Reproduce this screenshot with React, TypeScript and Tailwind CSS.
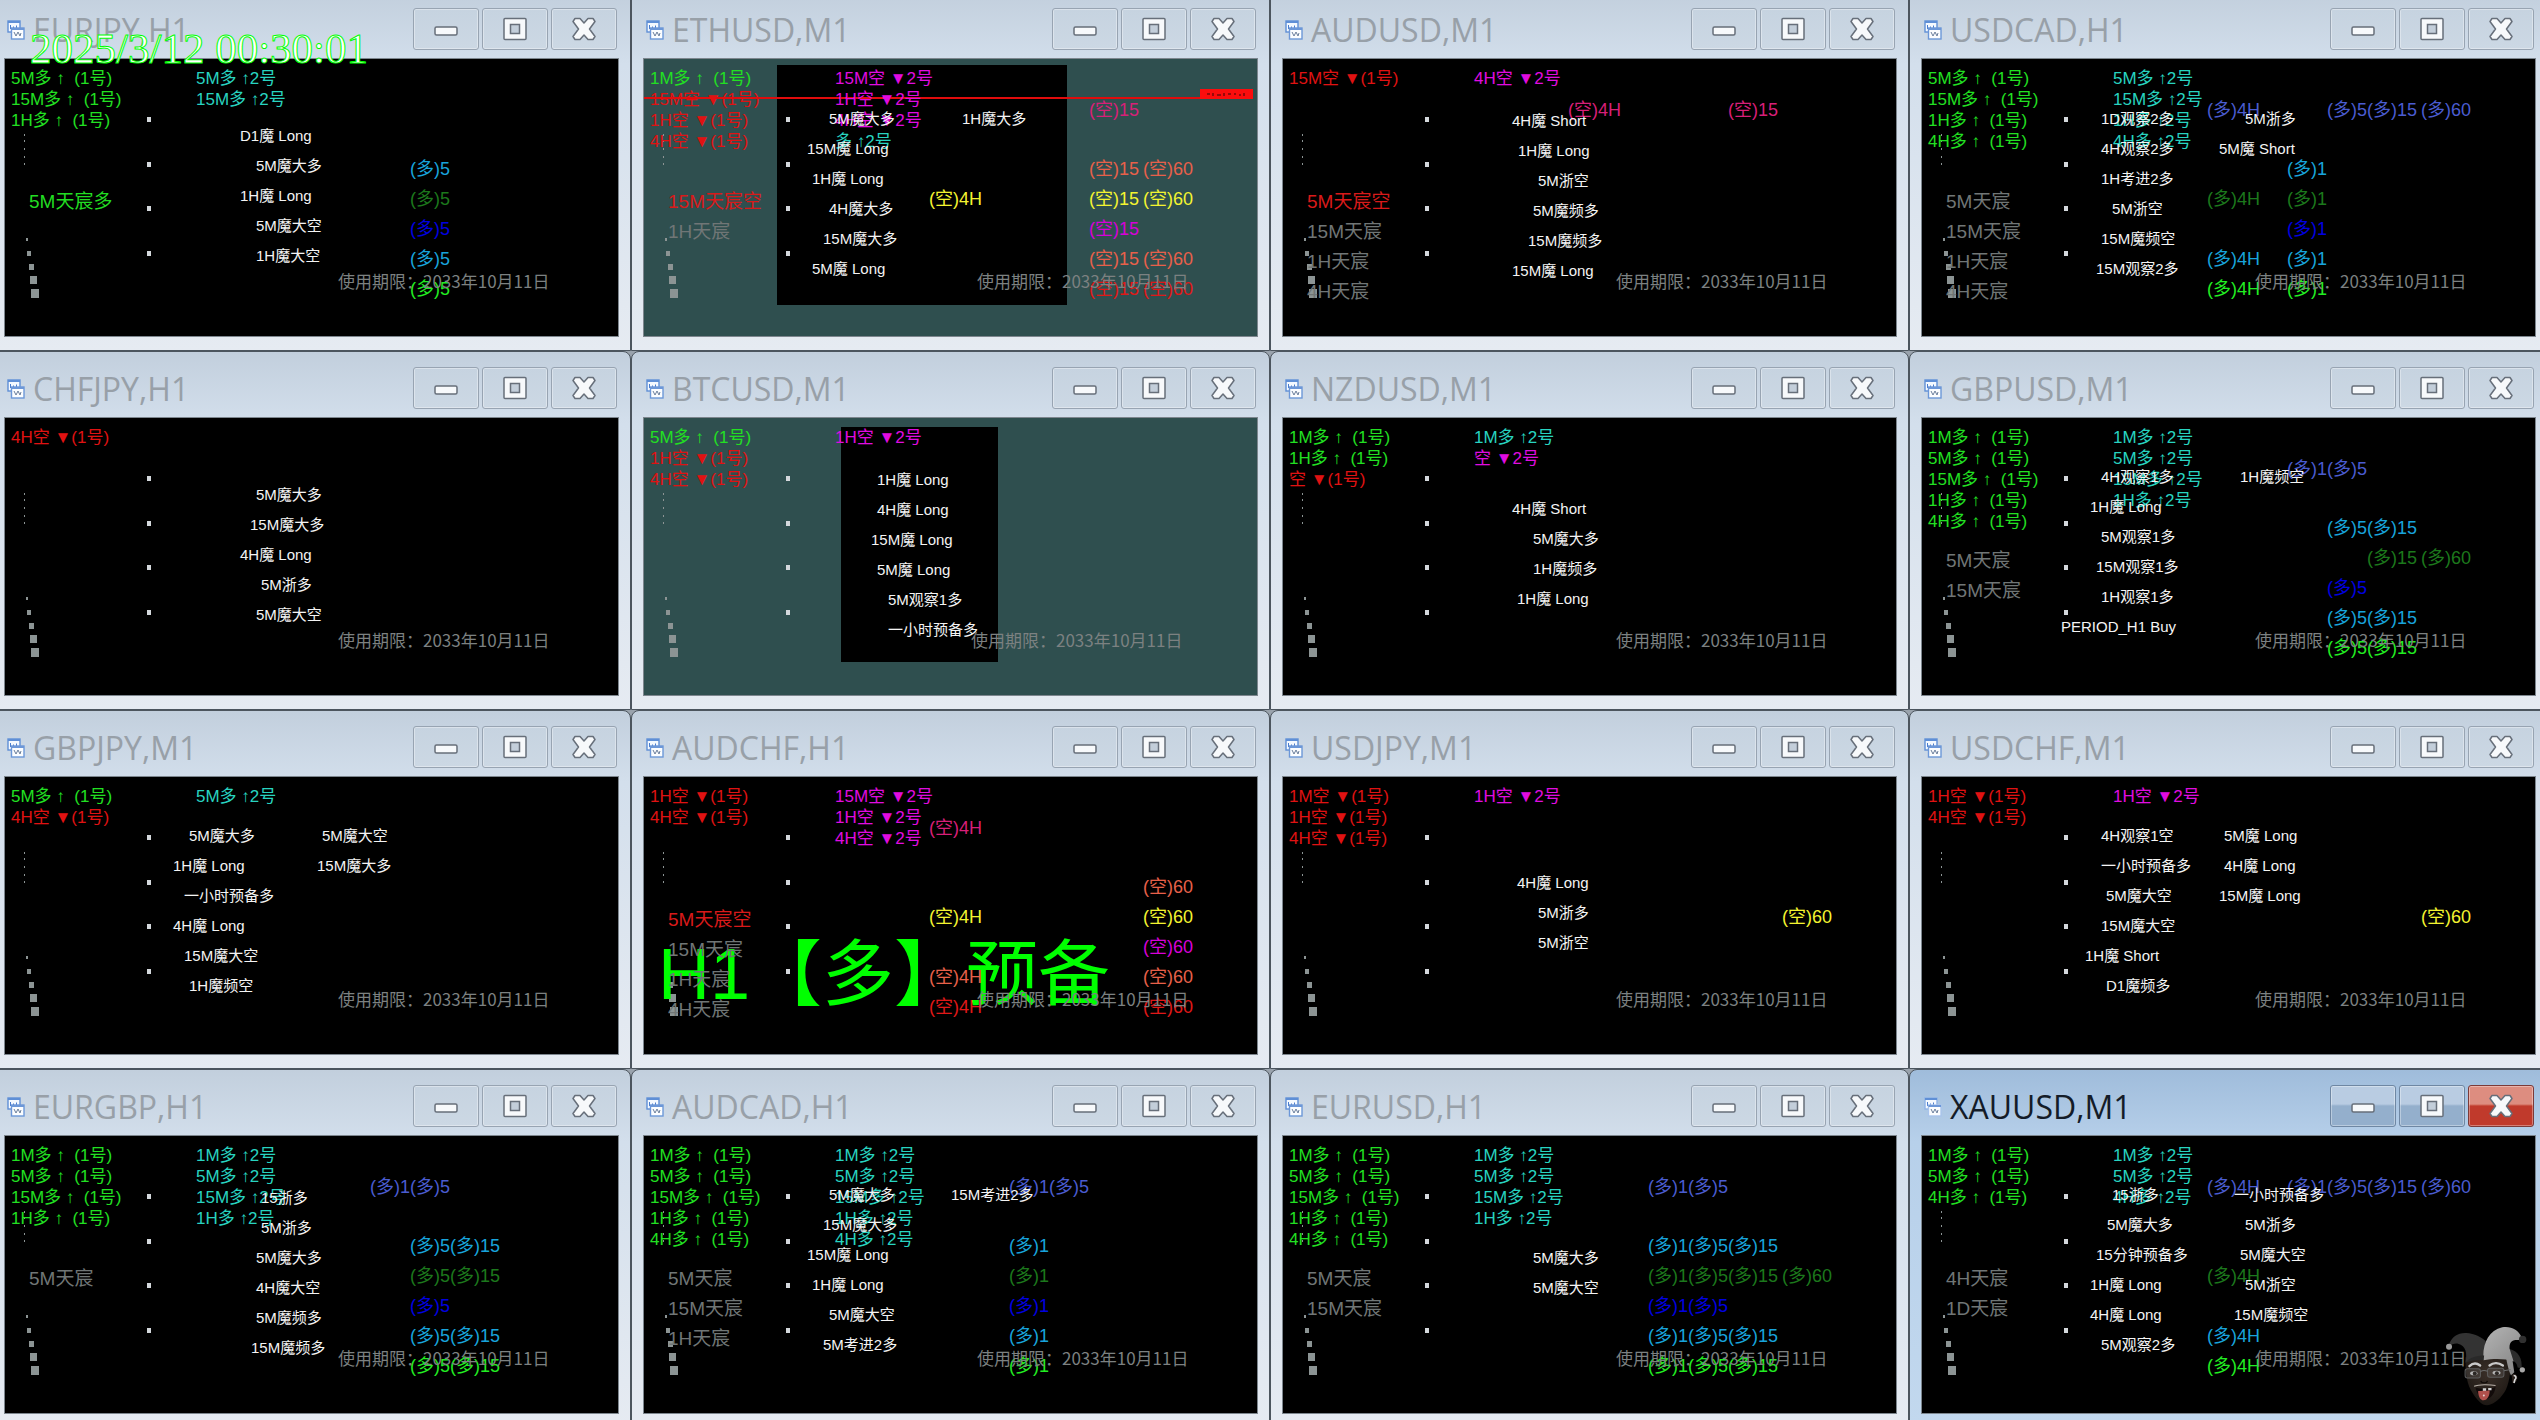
import React from "react";

type Side = "多" | "空";
type Note = [x: number, y: number, text: string];
type Slot = "4H" | "1" | "5" | "15" | "60";

interface Chart {
  symbol: string;
  side?: Side;
  first: string[];
  second: string[];
  tianchen?: string[];
  notes: Note[];
  slots?: Slot[][];
  active?: boolean;
  teal?: boolean;
  panel?: string;
  priceLine?: boolean;
  banner?: string;
  expiryShift?: boolean;
}

const up1 = (...frames: string[]) => frames.map((f) => f + "多 ↑  (1号)");
const down1 = (...frames: string[]) => frames.map((f) => f + "空 ▼(1号)");
const up2 = (...frames: string[]) => frames.map((f) => f + "多 ↑2号");
const down2 = (...frames: string[]) => frames.map((f) => f + "空 ▼2号");

const charts: Chart[] = [
  {
    symbol: "EURJPY,H1",
    side: "多",
    first: up1("5M", "15M", "1H"),
    second: up2("5M", "15M"),
    tianchen: ["5M天宸多"],
    notes: [
      [235, 78, "D1魔 Long"],
      [251, 108, "5M魔大多"],
      [235, 138, "1H魔 Long"],
      [251, 168, "5M魔大空"],
      [251, 198, "1H魔大空"],
    ],
    slots: [[], ["5"], ["5"], ["5"], ["5"], ["5"]],
  },
  {
    symbol: "ETHUSD,M1",
    side: "空",
    teal: true,
    panel: "left-[133px] top-[6px] w-[290px] h-[240px]",
    priceLine: true,
    first: [...up1("1M"), ...down1("15M", "1H", "4H")],
    second: [...down2("15M", "1H", "4H"), "多 ↑2号"],
    tianchen: ["15M天宸空", "1H天宸"],
    notes: [
      [185, 61, "5M魔大多"],
      [318, 61, "1H魔大多"],
      [163, 91, "15M魔 Long"],
      [168, 121, "1H魔 Long"],
      [185, 151, "4H魔大多"],
      [179, 181, "15M魔大多"],
      [168, 211, "5M魔 Long"],
    ],
    slots: [["15"], ["15", "60"], ["4H", "15", "60"], ["15"], ["15", "60"], ["15", "60"]],
  },
  {
    symbol: "AUDUSD,M1",
    side: "空",
    first: down1("15M"),
    second: down2("4H"),
    tianchen: ["5M天宸空", "15M天宸", "1H天宸", "4H天宸"],
    notes: [
      [229, 63, "4H魔 Short"],
      [235, 93, "1H魔 Long"],
      [255, 123, "5M浙空"],
      [250, 153, "5M魔频多"],
      [245, 183, "15M魔频多"],
      [229, 213, "15M魔 Long"],
    ],
    slots: [["4H", "15"]],
  },
  {
    symbol: "USDCAD,H1",
    side: "多",
    first: up1("5M", "15M", "1H", "4H"),
    second: up2("5M", "15M", "1H", "4H"),
    tianchen: ["5M天宸", "15M天宸", "1H天宸", "4H天宸"],
    notes: [
      [179, 61, "1D观察2多"],
      [323, 61, "5M浙多"],
      [179, 91, "4H观察2多"],
      [297, 91, "5M魔 Short"],
      [179, 121, "1H考进2多"],
      [190, 151, "5M浙空"],
      [179, 181, "15M魔频空"],
      [174, 211, "15M观察2多"],
    ],
    slots: [["4H", "5", "15", "60"], ["1"], ["4H", "1"], ["1"], ["4H", "1"], ["4H", "1"]],
  },
  {
    symbol: "CHFJPY,H1",
    first: down1("4H"),
    second: [],
    notes: [
      [251, 78, "5M魔大多"],
      [245, 108, "15M魔大多"],
      [235, 138, "4H魔 Long"],
      [256, 168, "5M浙多"],
      [251, 198, "5M魔大空"],
    ],
  },
  {
    symbol: "BTCUSD,M1",
    teal: true,
    panel: "left-[197px] top-[9px] w-[157px] h-[235px]",
    expiryShift: true,
    first: [...up1("5M"), ...down1("1H", "4H")],
    second: down2("1H"),
    notes: [
      [233, 63, "1H魔 Long"],
      [233, 93, "4H魔 Long"],
      [227, 123, "15M魔 Long"],
      [233, 153, "5M魔 Long"],
      [244, 183, "5M观察1多"],
      [244, 213, "一小时预备多"],
    ],
  },
  {
    symbol: "NZDUSD,M1",
    first: [...up1("1M", "1H"), ...down1("")],
    second: [...up2("1M"), ...down2("")],
    notes: [
      [229, 92, "4H魔 Short"],
      [250, 122, "5M魔大多"],
      [250, 152, "1H魔频多"],
      [234, 182, "1H魔 Long"],
    ],
  },
  {
    symbol: "GBPUSD,M1",
    side: "多",
    first: up1("1M", "5M", "15M", "1H", "4H"),
    second: up2("1M", "5M", "15M", "1H"),
    tianchen: ["5M天宸", "15M天宸"],
    notes: [
      [179, 60, "4H观察1多"],
      [318, 60, "1H魔频空"],
      [168, 90, "1H魔 Long"],
      [179, 120, "5M观察1多"],
      [174, 150, "15M观察1多"],
      [179, 180, "1H观察1多"],
      [139, 210, "PERIOD_H1 Buy"],
    ],
    slots: [["1", "5"], ["5", "15"], ["15", "60"], ["5"], ["5", "15"], ["5", "15"]],
  },
  {
    symbol: "GBPJPY,M1",
    first: [...up1("5M"), ...down1("4H")],
    second: up2("5M"),
    notes: [
      [184, 60, "5M魔大多"],
      [317, 60, "5M魔大空"],
      [168, 90, "1H魔 Long"],
      [312, 90, "15M魔大多"],
      [179, 120, "一小时预备多"],
      [168, 150, "4H魔 Long"],
      [179, 180, "15M魔大空"],
      [184, 210, "1H魔频空"],
    ],
  },
  {
    symbol: "AUDCHF,H1",
    side: "空",
    banner: "H1【多】预备",
    first: down1("1H", "4H"),
    second: down2("15M", "1H", "4H"),
    tianchen: ["5M天宸空", "15M天宸", "1H天宸", "4H天宸"],
    notes: [],
    slots: [["4H"], ["60"], ["4H", "60"], ["60"], ["4H", "60"], ["4H", "60"]],
  },
  {
    symbol: "USDJPY,M1",
    side: "空",
    first: down1("1M", "1H", "4H"),
    second: down2("1H"),
    notes: [
      [234, 107, "4H魔 Long"],
      [255, 137, "5M浙多"],
      [255, 167, "5M浙空"],
    ],
    slots: [[], [], ["60"]],
  },
  {
    symbol: "USDCHF,M1",
    side: "空",
    first: down1("1H", "4H"),
    second: down2("1H"),
    notes: [
      [179, 60, "4H观察1空"],
      [302, 60, "5M魔 Long"],
      [179, 90, "一小时预备多"],
      [302, 90, "4H魔 Long"],
      [184, 120, "5M魔大空"],
      [297, 120, "15M魔 Long"],
      [179, 150, "15M魔大空"],
      [163, 180, "1H魔 Short"],
      [184, 210, "D1魔频多"],
    ],
    slots: [[], [], ["60"]],
  },
  {
    symbol: "EURGBP,H1",
    side: "多",
    first: up1("1M", "5M", "15M", "1H"),
    second: up2("1M", "5M", "15M", "1H"),
    tianchen: ["5M天宸"],
    notes: [
      [256, 63, "15浙多"],
      [256, 93, "5M浙多"],
      [251, 123, "5M魔大多"],
      [251, 153, "4H魔大空"],
      [251, 183, "5M魔频多"],
      [246, 213, "15M魔频多"],
    ],
    slots: [["1", "5"], ["5", "15"], ["5", "15"], ["5"], ["5", "15"], ["5", "15"]],
  },
  {
    symbol: "AUDCAD,H1",
    side: "多",
    first: up1("1M", "5M", "15M", "1H", "4H"),
    second: up2("1M", "5M", "15M", "1H", "4H"),
    tianchen: ["5M天宸", "15M天宸", "1H天宸"],
    notes: [
      [185, 60, "5M魔大多"],
      [307, 60, "15M考进2多"],
      [179, 90, "15M魔大多"],
      [163, 120, "15M魔 Long"],
      [168, 150, "1H魔 Long"],
      [185, 180, "5M魔大空"],
      [179, 210, "5M考进2多"],
    ],
    slots: [["1", "5"], ["1"], ["1"], ["1"], ["1"], ["1"]],
  },
  {
    symbol: "EURUSD,H1",
    side: "多",
    first: up1("1M", "5M", "15M", "1H", "4H"),
    second: up2("1M", "5M", "15M", "1H"),
    tianchen: ["5M天宸", "15M天宸"],
    notes: [
      [250, 123, "5M魔大多"],
      [250, 153, "5M魔大空"],
    ],
    slots: [["1", "5"], ["1", "5", "15"], ["1", "5", "15", "60"], ["1", "5"], ["1", "5", "15"], ["1", "5", "15"]],
  },
  {
    symbol: "XAUUSD,M1",
    side: "多",
    active: true,
    first: up1("1M", "5M", "4H"),
    second: up2("1M", "5M", "4H"),
    tianchen: ["4H天宸", "1D天宸"],
    notes: [
      [190, 60, "15浙多"],
      [312, 60, "一小时预备多"],
      [185, 90, "5M魔大多"],
      [323, 90, "5M浙多"],
      [174, 120, "15分钟预备多"],
      [318, 120, "5M魔大空"],
      [168, 150, "1H魔 Long"],
      [323, 150, "5M浙空"],
      [168, 180, "4H魔 Long"],
      [312, 180, "15M魔频空"],
      [179, 210, "5M观察2多"],
    ],
    slots: [["4H", "1", "5", "15", "60"], [], ["4H"], [], ["4H"], ["4H"]],
  },
];

const slotX: Record<Slot, number> = { "4H": 285, "1": 365, "5": 405, "15": 445, "60": 499 };
const slotY = [52, 111, 141, 171, 201, 231];
const slotColor: Record<Side, string[]> = {
  多: ["text-[#4a5cd0]", "text-[#18a4dc]", "text-[#1c781c]", "text-[#0000e0]", "text-[#18a4dc]", "text-[#22ee22]"],
  空: ["text-[#d81f78]", "text-[#e8604a]", "text-[#f4f430]", "text-[#d800d8]", "text-[#e8604a]", "text-[#e01818]"],
};

function ChartIcon({ active }: { active?: boolean }) {
  return (
    <svg viewBox="0 0 18 20" className="h-5 w-[18px] shrink-0" aria-hidden="true">
      <rect x="1" y="1" width="12" height="11" fill="#f4f9ff" stroke={active ? "#8fb3e6" : "#5f8fd6"} strokeWidth="1.4" />
      <path d="M1 2h12" stroke="#5f8fd6" strokeWidth="2" />
      <path d="M3.5 5v4M6.5 6.5v3M9.5 5.5v3" stroke="#4a7ccc" />
      <rect x="4.5" y="8" width="12.5" height="11" fill="#fbfdff" stroke={active ? "#a9c4ec" : "#6c97d8"} strokeWidth="1.4" />
      <path d="M4.5 9h12.5" stroke="#6c97d8" strokeWidth="2" />
      <path d="M7 12l2 4 2-4 2 4 1-3" fill="none" stroke="#6b7f9c" />
    </svg>
  );
}

function MinimizeIcon() {
  return (
    <svg viewBox="0 0 24 24" className="h-6 w-6" aria-hidden="true">
      <rect x="1" y="10" width="22" height="8" rx="1.5" fill="#f7f9fb" stroke="#676f7a" strokeWidth="1.5" />
    </svg>
  );
}

function MaximizeIcon() {
  return (
    <svg viewBox="0 0 24 24" className="h-6 w-6" aria-hidden="true">
      <rect x="1" y="1.5" width="22" height="21" rx="1" fill="#f7f9fb" stroke="#676f7a" strokeWidth="1.5" />
      <rect x="7.5" y="7.5" width="9" height="9" fill="#c3ceda" stroke="#676f7a" strokeWidth="1.5" />
    </svg>
  );
}

function CloseIcon() {
  return (
    <svg viewBox="0 0 24 24" className="h-6 w-6" aria-hidden="true">
      <path
        d="M3 1.500h5l4 4.500 4-4.500h5l2 3-5.500 7.500 5.500 7.500-2 3h-5l-4-4.500-4 4.500H3l-2-3L6.500 12 1 4.500z"
        fill="#f7f9fb"
        stroke="#676f7a"
        strokeWidth="1.5"
        strokeLinejoin="round"
      />
    </svg>
  );
}

function Markers() {
  return (
    <svg viewBox="0 0 160 260" className="absolute left-0 top-0 h-[260px] w-40" aria-hidden="true">
      <g fill="#d4d8dc">
        {[58, 103, 147, 192].map((y) => (
          <rect key={y} x="142" y={y} width="4" height="5" />
        ))}
      </g>
      <g fill="#8c9494">
        {[75, 81, 89, 97, 104].map((y) => (
          <rect key={y} x="19" y={y} width="1" height="2" />
        ))}
        <rect x="21" y="179" width="2" height="3" />
        <rect x="22" y="192" width="4" height="5" />
        <rect x="24" y="205" width="5" height="6" />
        <rect x="25" y="217" width="7" height="8" />
        <rect x="26" y="230" width="8" height="9" />
      </g>
    </svg>
  );
}

function ChartCanvas({ chart }: { chart: Chart }) {
  return (
    <div
      className={
        "relative min-h-0 flex-1 overflow-hidden border border-[#7d868e] font-['Liberation_Sans','Noto_Sans_CJK_SC',sans-serif] whitespace-pre " +
        (chart.teal ? "bg-[#2f4f4f]" : "bg-black")
      }
    >
      {chart.panel && <div className={"absolute bg-black " + chart.panel} />}
      {chart.priceLine && (
        <>
          <div className="absolute left-0 top-[38px] h-[2px] w-[556px] bg-[#e00c0c]" />
          <div className="absolute left-[556px] top-[30px] flex h-[10px] w-[53px] items-center justify-center bg-[#fa0d0d]">
            <svg viewBox="0 0 44 6" className="h-[6px] w-11" aria-hidden="true">
              <path d="M2 3h3M8 2v3M12 4h4M19 2v3M23 3h3M30 2v2M34 4h2M39 2v3" stroke="#7a0808" strokeWidth="1.5" />
            </svg>
          </div>
        </>
      )}
      <Markers />
      {chart.banner && (
        <p className="absolute left-[14px] top-[161px] text-[72px] leading-[72px] text-[#00ff00]">{chart.banner}</p>
      )}
      {chart.slots?.map((row, r) =>
        row.map((slot) => (
          <span
            key={r + slot}
            className={"absolute text-[18px] leading-5 " + slotColor[chart.side!][r]}
            style={{ left: slotX[slot], top: slotY[r] - 11 }}
          >
            {"(" + chart.side + ")" + slot}
          </span>
        )),
      )}
      <p
        className={
          "absolute top-[212px] font-['Noto_Sans_CJK_SC',sans-serif] text-[17px] leading-5 text-[#7c8181] " +
          (chart.expiryShift ? "left-[327px]" : "left-[333px]")
        }
      >
        使用期限：2033年10月11日
      </p>
      <ul className="absolute left-[24px] top-[128px] text-[19px] leading-[30px]">
        {chart.tianchen?.map((t) => (
          <li
            key={t}
            className={t.endsWith("多") ? "text-[#22dd22]" : t.endsWith("空") ? "text-[#d81a1a]" : "text-[#707676]"}
          >
            {t}
          </li>
        ))}
      </ul>
      <ul className="absolute left-[6px] top-[9px] text-[17px] leading-[21px]">
        {chart.first.map((t) => (
          <li key={t} className={t.includes("▼") ? "text-[#e01212]" : "text-[#22e022]"}>
            {t}
          </li>
        ))}
      </ul>
      <ul className="absolute left-[191px] top-[9px] text-[17px] leading-[21px]">
        {chart.second.map((t) => (
          <li key={t} className={t.includes("▼") ? "text-[#e00ce0]" : "text-[#28d4c0]"}>
            {t}
          </li>
        ))}
      </ul>
      {chart.notes.map(([x, y, text]) => (
        <span key={x + "-" + y} className="absolute text-[15px] leading-5 text-[#f4f4f4]" style={{ left: x, top: y - 11 }}>
          {text}
        </span>
      ))}
    </div>
  );
}

function ChartWindow({ chart }: { chart: Chart }) {
  const button = chart.active
    ? "border-[#6f87a3] bg-linear-to-b from-[#b9cce2] from-45% to-[#94afcc] to-50%"
    : "border-[#98a4b2] bg-linear-to-b from-[#c6d3e0] to-[#ccd8e4]";
  const close = chart.active ? "border-[#7c3a38] bg-linear-to-b from-[#dd8d80] from-45% to-[#c03a2c] to-50%" : button;
  const buttonBase = "flex h-[42px] w-[66px] items-center justify-center rounded-[3px] border shadow-[inset_0_0_0_1px_rgba(255,255,255,0.35)] ";
  return (
    <section
      className={
        "flex min-h-0 min-w-0 flex-col rounded-t-lg border border-[#4c555e] px-[11px] pb-[13px] " +
        (chart.active
          ? "bg-linear-to-b from-[#9fbcdb] via-[#b7d0ea] via-20% to-[#c2d8ee]"
          : "bg-linear-to-b from-[#c2cfdd] via-[#d3dfec] via-20% to-[#e6ebf2]")
      }
    >
      <header className="flex h-[65px] shrink-0 items-start gap-[3px] pr-[2px] pt-[15px]">
        <div className="flex min-w-0 flex-1 items-center gap-2 pl-[3px]">
          <ChartIcon active={chart.active} />
          <h2
            className={
              "font-['Open_Sans',sans-serif] text-[32px] leading-[44px] " +
              (chart.active ? "text-[#141c28]" : "text-[#98a0a8]")
            }
          >
            {chart.symbol}
          </h2>
        </div>
        <button type="button" aria-label={"Minimize " + chart.symbol} className={buttonBase + button}>
          <MinimizeIcon />
        </button>
        <button type="button" aria-label={"Maximize " + chart.symbol} className={buttonBase + button}>
          <MaximizeIcon />
        </button>
        <button type="button" aria-label={"Close " + chart.symbol} className={buttonBase + close}>
          <CloseIcon />
        </button>
      </header>
      <ChartCanvas chart={chart} />
    </section>
  );
}

function JesterAvatar() {
  return (
    <svg viewBox="48 35 242 236" className="absolute bottom-[14px] right-[13px] h-[79px] w-[81px]" aria-hidden="true">
      <defs>
        <linearGradient id="hatLight" x1="0" y1="0" x2="1" y2="1">
          <stop offset="0" stopColor="#b4b4b4" />
          <stop offset="1" stopColor="#8a8a8a" />
        </linearGradient>
        <radialGradient id="skin" cx="0.5" cy="0.35" r="0.65">
          <stop offset="0" stopColor="#3a2f28" />
          <stop offset="1" stopColor="#1d1814" />
        </radialGradient>
      </defs>
      <path d="M236 100c30 8 40 30 38 58l-12-2c-2-14-8-20-22-22z" fill="#2c2c2c" />
      <circle cx="276" cy="163" r="8" fill="#a8a8a8" />
      <path d="M106 125c0 50 4 80 22 108 14 22 28 36 42 36 16 0 36-14 52-38 14-22 20-60 20-106z" fill="url(#skin)" />
      <path d="M228 130h18l6 40-10 10c-6-14-10-28-14-50z" fill="#8f8f8f" />
      <path d="M244 178c10-6 18 0 17 10s-8 16-14 14z" fill="#2b221d" />
      <path d="M250 180c8 0 9 8 4 12l-3 10" fill="none" stroke="#d8d8d8" strokeWidth="5" />
      <path d="M56 90c8-26 28-38 52-37 26 2 46 12 58 24l-6 56c-18-4-40 0-54 8 6-26 2-50-22-56-12-2-18 4-28 5z" fill="#333" />
      <path d="M160 134c-4-46 14-88 56-98 28-4 46 8 56 26l-4 12c-18-2-32 2-30 26l12 38c-28-10-62-8-90-4z" fill="url(#hatLight)" />
      <path d="M106 142c10-16 34-22 56-22l-2 14c-18-2-40 2-54 8z" fill="#292929" />
      <circle cx="57" cy="94" r="9" fill="#9a9a9a" />
      <circle cx="277" cy="72" r="11" fill="#303030" />
      <path d="M118 152c10-10 22-10 32-2M178 150c12-10 28-8 40 0" fill="none" stroke="#c8c8c8" strokeWidth="7" strokeLinecap="round" />
      <ellipse cx="131" cy="173" rx="11" ry="6" fill="#c0c0c0" />
      <ellipse cx="199" cy="172" rx="12" ry="6" fill="#c0c0c0" />
      <circle cx="134" cy="174" r="6" fill="#15100c" />
      <circle cx="200" cy="173" r="6" fill="#15100c" />
      <rect x="105" y="160" width="46" height="27" rx="7" fill="#8883" stroke="#5c5c5c" strokeWidth="3" />
      <rect x="172" y="158" width="49" height="27" rx="7" fill="#8883" stroke="#5c5c5c" strokeWidth="3" />
      <path d="M151 168c6-4 14-4 21-1M221 166l20-4" fill="none" stroke="#6c6c6c" strokeWidth="3" />
      <path d="M152 196c2 8 18 8 20 0" fill="none" stroke="#120d0a" strokeWidth="4" />
      <path d="M132 212c14-6 46-6 64-2" fill="none" stroke="#b8b0a8" strokeWidth="3" />
      <path d="M136 216c16 6 40 6 60-2-2 18-12 34-28 36-16 0-28-14-32-34z" fill="#120b0a" />
      <path d="M158 218h10v8h-10zM174 217h10v7h-10z" fill="#d0d0d0" />
      <path d="M144 226c10 0 24 0 34-2 2 14-6 30-18 30-10 0-16-14-16-28z" fill="#b0504c" />
      <circle cx="161" cy="240" r="3" fill="#e8d0d0" />
    </svg>
  );
}

export default function App() {
  return (
    <main className="relative h-screen overflow-hidden bg-[#9aa3ad]">
      <div className="-mx-[8px] -mt-[8px] grid h-[calc(100vh+16px)] grid-cols-4 grid-rows-4">
        {charts.map((chart) => (
          <ChartWindow key={chart.symbol} chart={chart} />
        ))}
      </div>
      <time
        dateTime="2025-03-12T00:30:01"
        className="absolute left-[30px] top-[25px] font-['Liberation_Serif',serif] text-[43px] leading-[48px] text-white [-webkit-text-stroke:1px_#00ff00]"
      >
        2025/3/12 00:30:01
      </time>
      <JesterAvatar />
    </main>
  );
}
